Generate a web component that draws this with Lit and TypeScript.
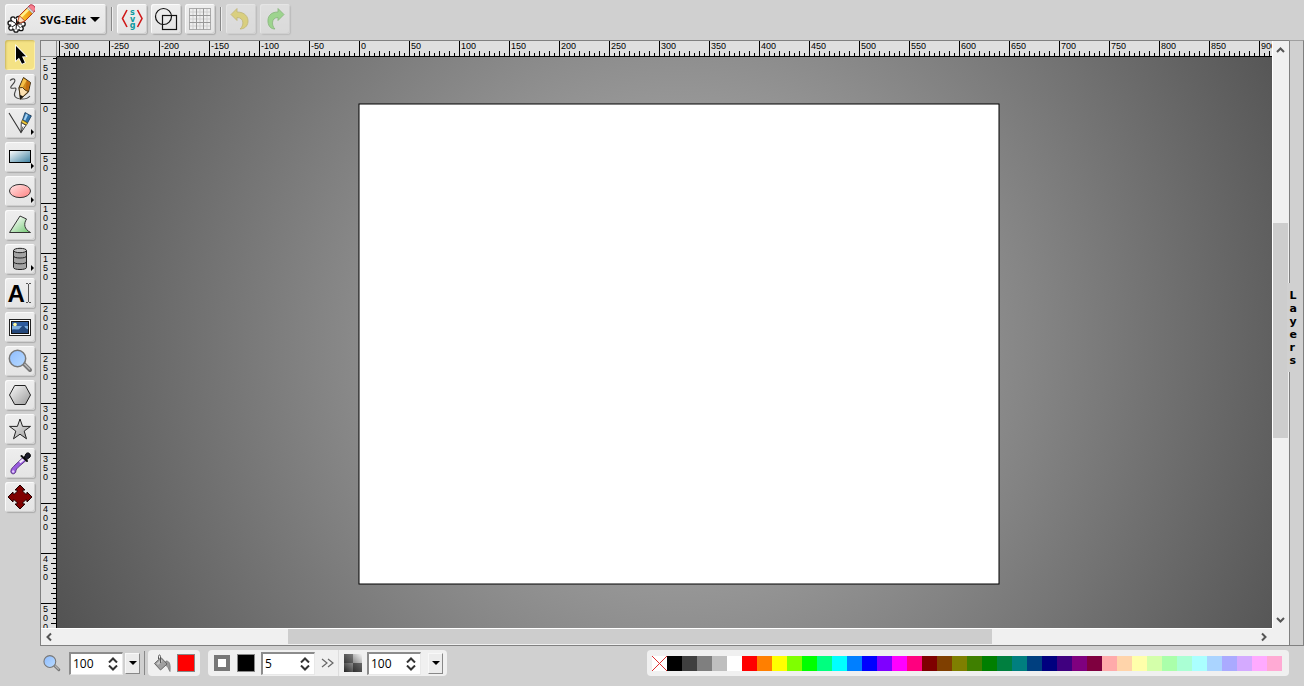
import { LitElement, html, svg, css } from "lit";
import { customElement, property, state } from "lit/decorators.js";

interface Tool {
  name: string;
  active?: boolean;
  flyout?: boolean;
  art: unknown;
}

const lens = svg`
  <path d="M18.5 17.5 L25 24" stroke="#777" stroke-width="4" stroke-linecap="round"/>
  <path d="M19.5 18 L24.5 23" stroke="#bbb" stroke-width="1.5" stroke-linecap="round"/>
  <circle cx="12.5" cy="12.5" r="8.2" fill="url(#lensFill)" stroke="#777" stroke-width="1.5"/>`;

const tools: Tool[] = [
  {
    name: "Select Tool",
    active: true,
    art: svg`<path d="M11 6 L11 20.5 L14 17.8 L17 23.8 L19.8 22.4 L17 16.6 L21 16.2 Z" fill="#000" stroke="#fff" stroke-width="1.6" paint-order="stroke"/>`,
  },
  {
    name: "Pencil Tool",
    art: svg`
      <path d="M5 6.5 C8 3.5 11 5 9.5 8 C8.5 10.5 4.5 12.5 6 14 C7.5 15 11 13 11 15 C11 17 8 20 10 22.5 C12.5 25.5 21 26.5 25 22" fill="none" stroke="#444" stroke-width="1.1"/>
      <path d="M18.5 3.5 L25.5 8.5 L23.5 18 L15.5 25 L14 13.5 Z" fill="#d08a1c" stroke="#3a2a10" stroke-width="1"/>
      <path d="M18.5 4.5 L21.5 6.5 L17 14.5 L14.7 13.5 Z" fill="#f5c04a"/>
      <path d="M21.8 6.5 L25 8.7 L23 17.5 L20.5 16 Z" fill="#c26d10"/>
      <path d="M14 13.8 L17.5 13.5 L20 16 L23.3 17.6 L15.5 25 Z" fill="#fce0b0" stroke="#3a2a10" stroke-width=".9"/>
      <path d="M15 21 L18.2 22.3 L15.2 25.5 Z" fill="#111"/>`,
  },
  {
    name: "Path Tool",
    flyout: true,
    art: svg`
      <path d="M4 5 L16 24.5 L26 7" fill="none" stroke="#333" stroke-width="1.1"/>
      <path d="M20 4.5 L26.3 8 L22.5 15 L17.5 12 Z" fill="#2f74ad" stroke="#1d3d5c" stroke-width=".8"/>
      <path d="M21 5.8 L23 7 L20.3 12.5 L18.6 11.7 Z" fill="#a6d2f2"/>
      <path d="M17.3 12 L22.6 15 L21.3 17.2 L16.3 14.4 Z" fill="#f2cc3d" stroke="#5c4a10" stroke-width=".7"/>
      <path d="M16.3 14.6 L21 17.3 L16 24.5 Z" fill="#fff" stroke="#333" stroke-width=".9"/>
      <path d="M16 24 L18 18.5" stroke="#333" stroke-width=".8"/>`,
  },
  {
    name: "Rectangle",
    flyout: true,
    art: svg`<rect x="4.5" y="8.5" width="21" height="12" fill="url(#rectFill)" stroke="#000" stroke-width="1"/>`,
  },
  {
    name: "Ellipse",
    flyout: true,
    art: svg`<ellipse cx="15" cy="15" rx="10.5" ry="6.6" fill="url(#ellipseFill)" stroke="#333" stroke-width="1"/>`,
  },
  {
    name: "Polygon",
    art: svg`<path d="M4.5 22.5 L15 6 L21.5 9 C18.5 14 19 19 25.5 22.5 Z" fill="url(#polyFill)" stroke="#333" stroke-width="1"/>`,
  },
  {
    name: "Shape Library",
    flyout: true,
    art: svg`
      <path d="M8.5 6.5 V23.5 C8.5 26.2 21.5 26.2 21.5 23.5 V6.5" fill="#a3a3a3" stroke="#222" stroke-width="1"/>
      <ellipse cx="15" cy="6.5" rx="6.5" ry="2.2" fill="#c4c4c4" stroke="#222" stroke-width="1"/>
      <path d="M8.5 12 C8.5 14.7 21.5 14.7 21.5 12 M8.5 17.8 C8.5 20.5 21.5 20.5 21.5 17.8" fill="none" stroke="#222" stroke-width="1"/>`,
  },
  {
    name: "Text Tool",
    art: svg`
      <text x="2.5" y="23.5" class="letter">A</text>
      <path d="M21 5.5 H23 M24 5.5 H26 M21 24.5 H23 M24 24.5 H26 M23.5 6 V24" fill="none" stroke="#555" stroke-width="1"/>`,
  },
  {
    name: "Image Tool",
    art: svg`
      <rect x="4.5" y="7.5" width="21" height="16" fill="#fff" stroke="#222" stroke-width="1"/>
      <rect x="6.5" y="9.5" width="17" height="12" fill="#2f5c9e" stroke="#111" stroke-width="1"/>
      <path d="M7 14 H23 V17.5 H7 Z" fill="#7eaede"/>
      <path d="M7 18 C10 16.5 12 18.5 14 17.5 C17 13 19 12.5 20.5 16 L23 17.5 V21 H7 Z" fill="#24487c"/>
      <circle cx="10" cy="12.5" r="1.8" fill="#fdf7a0"/>`,
  },
  { name: "Zoom Tool", art: lens },
  {
    name: "Regular Polygon",
    art: svg`<path d="M4.5 15 L9.7 5.5 H20.3 L25.5 15 L20.3 24.5 H9.7 Z" fill="url(#greyFill)" stroke="#222" stroke-width="1"/>`,
  },
  {
    name: "Star Tool",
    art: svg`<path d="M15 5 L17.6 12.4 H25.5 L19.2 17.1 L21.5 24.8 L15 20.2 L8.5 24.8 L10.8 17.1 L4.5 12.4 H12.4 Z" fill="url(#greyFill)" stroke="#222" stroke-width="1"/>`,
  },
  {
    name: "Eye Dropper Tool",
    art: svg`
      <path d="M18 9.5 L10 17 C8.5 19 6 20 5.8 23.5 C6 27 11 26.5 11 22.5 C11.5 20.5 13 19.5 14 18.5 L21 12.5 Z" fill="#9a5cdf" stroke="#43256b" stroke-width=".8"/>
      <path d="M17.5 10.5 L14 13.7 L15.5 15.2 L19.5 12 Z" fill="#f1e8fb"/>
      <circle cx="8.2" cy="23.5" r="1.2" fill="#e4ccff"/>
      <path d="M16.5 8 L22 13" stroke="#111" stroke-width="2" stroke-linecap="round"/>
      <path d="M19 10 L21 5.8 C23 3.5 26.5 6 25 9 L21.5 11.8 Z" fill="#1b1b2a" stroke="#000" stroke-width="1"/>`,
  },
  {
    name: "Pan Tool",
    art: svg`<path d="M15 3 L20 8 H18 V9.5 L20.5 12 H22 V10 L27 15 L22 20 V18 H20.5 L18 20.5 V22 H20 L15 27 L10 22 H12 V20.5 L9.5 18 H8 V20 L3 15 L8 10 V12 H9.5 L12 9.5 V8 H10 Z" fill="#800000" stroke="#200" stroke-width="1"/>`,
  },
];

const palette = [
  "#000000", "#3f3f3f", "#7f7f7f", "#bfbfbf", "#ffffff",
  "#ff0000", "#ff7f00", "#ffff00", "#7fff00", "#00ff00", "#00ff7f", "#00ffff",
  "#007fff", "#0000ff", "#7f00ff", "#ff00ff", "#ff007f",
  "#7f0000", "#7f3f00", "#7f7f00", "#3f7f00", "#007f00", "#007f3f", "#007f7f",
  "#003f7f", "#00007f", "#3f007f", "#7f007f", "#7f003f",
  "#ffaaaa", "#ffd4aa", "#ffffaa", "#d4ffaa", "#aaffaa", "#aaffd4", "#aaffff",
  "#aad4ff", "#aaaaff", "#d4aaff", "#ffaaff", "#ffaad4",
];

/* Page origin and size inside the work area */
const ORIGIN_X = 302;
const ORIGIN_Y = 47;
const PAGE_W = 640;
const PAGE_H = 480;

const gradients = svg`
  <defs>
    <linearGradient id="rectFill" x1="0" y1="0" x2="1" y2="1"><stop offset="0" stop-color="#fff"/><stop offset="1" stop-color="#3b7f9f"/></linearGradient>
    <linearGradient id="ellipseFill" x1="0" y1="0" x2="1" y2="1"><stop offset="0" stop-color="#ffe8e8"/><stop offset="1" stop-color="#ff8080"/></linearGradient>
    <linearGradient id="polyFill" x1="0" y1="0" x2="1" y2="1"><stop offset="0.2" stop-color="#f4fbf4"/><stop offset="1" stop-color="#6cc46c"/></linearGradient>
    <linearGradient id="greyFill" x1="0" y1="0" x2="1" y2="1"><stop offset="0" stop-color="#fafafa"/><stop offset="1" stop-color="#999"/></linearGradient>
    <linearGradient id="lensFill" x1="0" y1="0" x2="1" y2="1"><stop offset="0" stop-color="#8ebcff"/><stop offset="1" stop-color="#b9dbff"/></linearGradient>
    <linearGradient id="opacityFill" x1="0" y1="1" x2="1" y2="0"><stop offset="0" stop-color="#222"/><stop offset="1" stop-color="#f4f4f4"/></linearGradient>
    <linearGradient id="eraserFill" x1="0" y1="0" x2="1" y2="0"><stop offset="0" stop-color="#ffd23c"/><stop offset="1" stop-color="#e98a00"/></linearGradient>
  </defs>`;

@customElement("se-icon")
class SeIcon extends LitElement {
  static styles = css`
    :host { display: block; }
    svg { display: block; width: 100%; height: 100%; }
    .letter { font: bold 24px "Liberation Sans", Arial, sans-serif; }
    .tiny { font: bold 8px "DejaVu Sans", Verdana, sans-serif; fill: #0d9aa0; text-anchor: middle; }
  `;
  @property({ attribute: false }) art: unknown;
  @property() box = "0 0 30 30";
  render() {
    return html`<svg viewBox=${this.box} aria-hidden="true">${gradients}${this.art}</svg>`;
  }
}

@customElement("se-ruler")
class SeRuler extends LitElement {
  static styles = css`
    :host { display: block; overflow: hidden; background: #dfdfdf; }
    svg { display: block; width: 100%; height: 100%; }
    text { font: 9px "Liberation Sans", Arial, sans-serif; fill: #000; }
    path { stroke: #000; fill: none; shape-rendering: crispEdges; }
  `;
  @property({ type: Boolean }) vertical = false;
  @state() private length = 1300;
  private observer = new ResizeObserver(() => this.measure());

  connectedCallback() {
    super.connectedCallback();
    this.observer.observe(this);
  }

  disconnectedCallback() {
    this.observer.disconnect();
    super.disconnectedCallback();
  }

  private measure() {
    this.length = this.vertical ? this.clientHeight : this.clientWidth;
  }

  render() {
    const origin = this.vertical ? ORIGIN_Y : ORIGIN_X;
    const first = this.vertical ? -50 : -300;
    let d = "";
    const labels: unknown[] = [];
    for (let value = first; origin + value < this.length; value += 5) {
      const at = origin + value + (this.vertical ? -0.5 : 0.5);
      const step = Math.abs(value % 50) / 5;
      const start = step === 0 ? 0 : step % 2 ? 12 : 10;
      d += this.vertical ? `M${start} ${at}H16` : `M${at} ${start}V16`;
      if (step !== 0) continue;
      if (this.vertical) {
        String(value).split("").forEach((c, i) => {
          labels.push(svg`<text x="2" y=${at + 8.5 + i * 9}>${c}</text>`);
        });
      } else {
        labels.push(svg`<text x=${at + 1.5} y="8">${value}</text>`);
      }
    }
    d += this.vertical ? `M15.5 0V${this.length}` : `M0 15.5H${this.length}`;
    return html`<svg aria-hidden="true"><path d=${d}></path>${labels}</svg>`;
  }
}

@customElement("se-spin")
class SeSpin extends LitElement {
  static styles = css`
    :host { display: block; }
    .box {
      display: flex; height: 23px; box-sizing: border-box; background: #fff;
      border: 1px solid #e8e8e8; border-top: 2px solid #8c8c8c; border-left: 2px solid #8c8c8c;
    }
    input {
      flex: 1; min-width: 0; border: 0; padding: 0 0 0 2px; background: none; outline: none;
      font: 12px "Open Sans", Tahoma, sans-serif; color: #000;
    }
    .arrows { display: flex; flex-direction: column; justify-content: center; gap: 2px; width: 18px; }
    button { border: 0; padding: 0; background: none; height: 6px; display: flex; justify-content: center; }
    svg { width: 10px; height: 6px; display: block; }
    path { fill: none; stroke: #333; stroke-width: 2; }
  `;
  @property() label = "";
  @property() value = "";
  render() {
    return html`<div class="box">
      <input type="text" aria-label=${this.label} .value=${this.value} />
      <div class="arrows">
        <button aria-label="Increase"><svg viewBox="0 0 10 6"><path d="M1 5.5 L5 1.5 L9 5.5"></path></svg></button>
        <button aria-label="Decrease"><svg viewBox="0 0 10 6"><path d="M1 .5 L5 4.5 L9 .5"></path></svg></button>
      </div>
    </div>`;
  }
}

const logoArt = svg`
  <g fill="#fff" stroke="#111" stroke-width="1.3">
    <circle cx="13.5" cy="14.5" r="2.2"/><circle cx="8" cy="15" r="2.2"/><circle cx="5.2" cy="19" r="2.2"/>
    <circle cx="6" cy="24" r="2.2"/><circle cx="11" cy="26" r="2.2"/><circle cx="16" cy="24.5" r="2.2"/><circle cx="18" cy="20" r="2.2"/>
  </g>
  <circle cx="11.5" cy="20" r="5.5" fill="#fff"/>
  <path d="M11.5 20 V15 M11.5 20 L7 17 M11.5 20 L7 23 M11.5 20 L11 25.5 M11.5 20 L15.5 24 M11.5 20 H17" stroke="#111" stroke-width="1"/>
  <path d="M12 20 L14.5 11.5 L23.5 2.5 L29 8 L20 17 Z" fill="url(#eraserFill)" stroke="#b03a20" stroke-width="1"/>
  <path d="M15 12 L23 4 L24.8 5.8 L16.8 13.8 Z" fill="#fff08a"/>
  <path d="M12 20 L14.5 11.8 L19.8 17 Z" fill="#ffe3bd" stroke="#b03a20" stroke-width=".8"/>
  <path d="M11.6 20.4 L12.8 16.8 L15.2 19 Z" fill="#111"/>
  <path d="M23 3 L25.5 .8 C28 .2 31.2 3.5 30.5 6 L28.5 8.5 Z" fill="#f77f8e" stroke="#b02840" stroke-width="1"/>
  <path d="M22 4.2 L23.3 2.8 L28.8 8.2 L27.4 9.6 Z" fill="#ddd" stroke="#777" stroke-width=".5"/>`;

const sourceArt = svg`
  <path d="M10 6 L5.5 14.5 L10 23" fill="none" stroke="#d01818" stroke-width="1.6"/>
  <path d="M20.5 6 L25 14.5 L20.5 23" fill="none" stroke="#d01818" stroke-width="1.6"/>
  <text class="tiny" x="15.5" y="10.5">s</text><text class="tiny" x="15.5" y="17.5">v</text><text class="tiny" x="15.5" y="23.5">g</text>`;

const wireArt = svg`
  <circle cx="12.5" cy="12.5" r="8" fill="none" stroke="#111" stroke-width="1.2"/>
  <rect x="11.5" y="11.5" width="14" height="14" fill="none" stroke="#111" stroke-width="1.2"/>`;

const gridArt = svg`
  <rect x="4.5" y="4.5" width="21" height="21" fill="#eee" stroke="#aaa" stroke-width="1"/>
  <path d="M8 5 V25 M15 5 V25 M22 5 V25 M5 8 H25 M5 15 H25 M5 22 H25" stroke="#d0d0d0" stroke-width="1"/>
  <path d="M11.5 4.5 V25.5 M18.5 4.5 V25.5 M4.5 11.5 H25.5 M4.5 18.5 H25.5" stroke="#999" stroke-width="1"/>`;

const undoArt = svg`<path d="M5 10.5 L11 4.5 V8 C19 8 22.5 13 22 18 C21.5 22.5 18 25 14 25 C18 22 18.5 13.5 11 13.5 V16.5 Z" fill="#e2cf30" stroke="#b09a22" stroke-width=".8"/>`;
const redoArt = svg`<path d="M24 10.5 L18 4.5 V8 C10 8 7.5 13 8 18 C8.5 22.5 11 25 15 25 C11.5 22 11 13.5 18 13.5 V16.5 Z" fill="#6cd84e" stroke="#3f9a2a" stroke-width=".8"/>`;

const bucketArt = svg`
  <path d="M13 7 C17 7 17.5 11 17 17.5 C15 15 15.5 12 12 11 Z" fill="#999" stroke="#777" stroke-width=".8"/>
  <path d="M1.5 9.5 L8 3.5 L14 10 L7.5 16 Z" fill="#a0a0a0" stroke="#666" stroke-width="1"/>
  <path d="M3.5 9.5 L8 5.5 L9.5 7 L5 11 Z" fill="#c8c8c8"/>
  <path d="M7.5 9 V2.5 C7.5 .5 5.5 .5 5.5 2.5 V5" fill="none" stroke="#555" stroke-width="1"/>`;

const opacityArt = svg`
  <rect width="18" height="18" fill="url(#opacityFill)"/>
  <rect width="9" height="9" fill="#000" opacity=".35"/><rect x="9" y="9" width="9" height="9" fill="#000" opacity=".45"/>`;

@customElement("app-root")
class AppRoot extends LitElement {
  static styles = css`
    :host {
      display: grid; grid-template: 40px minmax(0, 1fr) 40px / 40px minmax(0, 1fr) 15px;
      height: 100vh; background: #d0d0d0; overflow: hidden;
      font: 12px "Open Sans", Tahoma, sans-serif; color: #000;
    }
    button { font: inherit; color: inherit; margin: 0; padding: 0; box-sizing: border-box; }

    .top { grid-column: 1 / -1; display: flex; align-items: flex-start; gap: 4px; padding: 4px 5px 0; }
    .push {
      position: relative; width: 30px; height: 30px; flex: none; border: 0; border-radius: 3px;
      background: linear-gradient(#eeeeee, #e4e4e4);
      box-shadow: inset 1px 1px 0 #fafafa, inset -1px -1px 0 #cfcfcf, 1px 1px 1px #aaa;
    }
    .push se-icon { width: 30px; height: 30px; }
    .push.active { background: #f4e284; box-shadow: inset 1px 1px 2px #c8b560, inset -1px -1px 0 #fff3b0; }
    .dim { opacity: .5; }
    .main { width: 101px; display: flex; align-items: center; font-size: 11px; font-weight: 700; }
    .main .caption { flex: 1; text-align: left; padding-left: 5px; white-space: nowrap; }
    .down { width: 0; height: 0; border: 5px solid transparent; border-top-color: #000; border-bottom: 0; margin-right: 6px; }
    .flyout { position: absolute; right: 1px; bottom: 3px; border: 3px solid transparent; border-left: 3px solid #000; border-right: 0; }
    .sep { width: 1px; height: 24px; margin: 3px 0 0 1px; background: #888; border-right: 1px solid #eee; }

    .tools { display: flex; flex-direction: column; gap: 4px; padding: 0 5px; }

    .work {
      display: grid; grid-template: 16px minmax(0, 1fr) 17px / 16px minmax(0, 1fr) 17px;
      border: 1px solid #808080; border-right: 0; background: #f0f0f0;
    }
    .corner { background: #dfdfdf; border-right: 1px solid #888; border-bottom: 1px solid #888; }
    .stage { display: block; width: 100%; height: 100%; background: radial-gradient(circle 1000px at 622px 287px, #bbb, #222); }
    .vbar { grid-column: 3; grid-row: 1 / 3; display: flex; flex-direction: column; align-items: stretch; padding: 0 1px; }
    .hbar { grid-column: 1 / 3; grid-row: 3; display: flex; align-items: stretch; padding: 1px 0; }
    .vbar, .hbar { background: #f0f0f0; }
    .vbar { box-shadow: inset 1px 0 0 #fff; }
    .hbar { box-shadow: inset 0 1px 0 #fff; }
    .thumb { background: #cdcdcd; }
    .before, .after { display: flex; align-items: center; }
    .vbar .before, .vbar .after { flex-direction: column; }
    .after { justify-content: flex-end; }
    .vbar .before { flex: 182; } .vbar .thumb { flex: 215; } .vbar .after { flex: 190; }
    .hbar .before { flex: 247; } .hbar .thumb { flex: 704; } .hbar .after { flex: 280; }
    .chev { width: 15px; height: 16px; fill: none; stroke: #555; stroke-width: 2; flex: none; }

    .side {
      border: 1px solid #808080; border-top-color: #a0a0a0; padding-bottom: 32px;
      display: flex; align-items: center; justify-content: center;
    }
    .layers {
      position: relative; left: -3px; flex: none; width: 14px; border: 0; background: #d0d0d0; padding: 6px 0 5px 3px;
      font: bold 11px/13px "DejaVu Sans", Verdana, sans-serif; text-align: left;
    }
    .layers span { display: block; }

    .bottom { grid-column: 1 / -1; display: flex; align-items: flex-start; padding: 4px 15px 0 43px; }
    .group { display: flex; align-items: center; height: 26px; background: #f0f0f0; border-radius: 4px; box-sizing: border-box; padding: 0 5px; flex: none; }
    .group.plain { background: none; padding: 0; }
    .group se-icon { width: 18px; height: 18px; flex: none; }
    .field { width: 54px; flex: none; }
    .drop {
      width: 15px; height: 21px; border: 1px solid; border-color: #f8f8f8 #888 #888 #f8f8f8; background: #ececec;
      display: flex; align-items: center; justify-content: center; flex: none;
    }
    .drop i { border: 4px solid transparent; border-top-color: #000; border-bottom: 0; }
    .well { width: 18px; height: 18px; border: 1px solid #888; flex: none; }
    .red { background: #f00; } .black { background: #000; }
    .outline { width: 16px; height: 16px; box-sizing: border-box; border: 4px solid #777; background: #fff; flex: none; }
    .more { border: 0; background: none; width: 14px; height: 12px; }
    .more svg { display: block; width: 14px; height: 12px; fill: none; stroke: #666; stroke-width: 1.2; }
    .line { width: 1px; height: 24px; margin: 1px 3px 0 4px; background: #888; }
    .zoom { gap: 2px; } .zoom .field { margin-left: 6px; }
    .fill { gap: 6px; width: 52px; }
    .stroke { gap: 6px; margin-left: 8px; width: 130px; border-radius: 4px 0 0 4px; padding: 0 4px 0 6px; }
    .outline { margin-right: 1px; }
    .opacity { width: 109px; border-radius: 0 4px 4px 0; gap: 5px; border-left: 1px solid #ddd; }
    .opacity .drop { margin-left: 2px; }
    .palette { margin-left: auto; padding-right: 7px; }
    .swatch { width: 15px; height: 15px; border: 0; flex: none; }
    .none { background: #fff; }
    .none svg { display: block; width: 15px; height: 15px; }
  `;

  private push(name: string, art: unknown, cls = "") {
    return html`<button class="push ${cls}" title=${name} aria-label=${name}><se-icon .art=${art}></se-icon></button>`;
  }

  private chevron(d: string) {
    return html`<svg class="chev" viewBox="0 0 15 16"><path d=${d}></path></svg>`;
  }

  render() {
    return html`
      <header class="top">
        <button class="push main" aria-label="Main menu">
          <se-icon .art=${logoArt}></se-icon><span class="caption">SVG-Edit</span><span class="down"></span>
        </button>
        <div class="sep"></div>
        ${this.push("Edit Source", sourceArt)}
        ${this.push("Wireframe Mode", wireArt)}
        ${this.push("Show/Hide Grid", gridArt)}
        <div class="sep"></div>
        ${this.push("Undo", undoArt, "dim")}
        ${this.push("Redo", redoArt, "dim")}
      </header>

      <nav class="tools" aria-label="Tools">
        ${tools.map((t) => html`
          <button class="push ${t.active ? "active" : ""}" title=${t.name} aria-label=${t.name}>
            <se-icon .art=${t.art}></se-icon>${t.flyout ? html`<span class="flyout"></span>` : ""}
          </button>`)}
      </nav>

      <main class="work">
        <div class="corner"></div>
        <se-ruler></se-ruler>
        <div class="vbar">
          <div class="before">${this.chevron("M4 11 L7.5 7.5 L11 11")}</div>
          <div class="thumb"></div>
          <div class="after">${this.chevron("M4 6 L7.5 9.5 L11 6")}</div>
        </div>
        <se-ruler vertical></se-ruler>
        <svg class="stage" role="img" aria-label="Drawing canvas">
          <rect x=${ORIGIN_X} y=${ORIGIN_Y} width=${PAGE_W} height=${PAGE_H} fill="#fff" stroke="#000"></rect>
        </svg>
        <div class="hbar">
          <div class="before">${this.chevron("M10 4.5 L6.5 8 L10 11.5")}</div>
          <div class="thumb"></div>
          <div class="after">${this.chevron("M5 4.5 L8.5 8 L5 11.5")}</div>
        </div>
      </main>

      <aside class="side">
        <button class="layers" aria-label="Layers">${"Layers".split("").map((c) => html`<span>${c}</span>`)}</button>
      </aside>

      <footer class="bottom">
        <div class="group plain zoom">
          <se-icon .art=${lens} box="3 2 25 25"></se-icon>
          <se-spin class="field" label="Zoom level" value="100"></se-spin>
          <button class="drop" aria-label="Zoom presets"><i></i></button>
        </div>
        <div class="line"></div>
        <div class="group fill">
          <se-icon .art=${bucketArt} box="0 0 18 18"></se-icon>
          <button class="well red" aria-label="Fill color"></button>
        </div>
        <div class="group stroke">
          <span class="outline"></span>
          <button class="well black" aria-label="Stroke color"></button>
          <se-spin class="field" label="Stroke width" value="5"></se-spin>
          <button class="more" aria-label="More stroke options"><svg viewBox="0 0 14 12"><path d="M1 2 L6 6 L1 10 M7 2 L12 6 L7 10"></path></svg></button>
        </div>
        <div class="group opacity">
          <se-icon .art=${opacityArt} box="0 0 18 18"></se-icon>
          <se-spin class="field" label="Opacity" value="100"></se-spin>
          <button class="drop" aria-label="Opacity presets"><i></i></button>
        </div>
        <div class="group palette">
          <button class="swatch none" aria-label="No color"><svg viewBox="0 0 15 15"><path d="M0 0 L15 15 M15 0 L0 15" fill="none" stroke="#e03030"></path></svg></button>
          ${palette.map((c) => html`<button class="swatch" aria-label=${c} style="background:${c}"></button>`)}
        </div>
      </footer>
    `;
  }
}
